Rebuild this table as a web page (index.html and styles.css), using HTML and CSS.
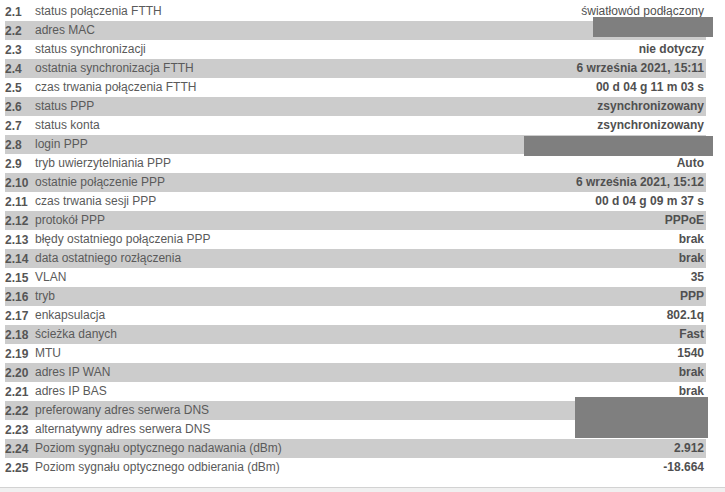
FILE: index.html
```html
<!DOCTYPE html>
<html lang="pl">
<head>
<meta charset="utf-8">
<title>Status FTTH</title>
<link rel="stylesheet" href="styles.css">
</head>
<body>
<div class="page">
  <div class="status">
    <div class="row"><span class="num">2.1</span><span class="label">status połączenia FTTH</span><span class="val normal">światłowód podłączony</span></div>
    <div class="row alt"><span class="num">2.2</span><span class="label">adres MAC</span><span class="val"></span></div>
    <div class="row"><span class="num">2.3</span><span class="label">status synchronizacji</span><span class="val">nie dotyczy</span></div>
    <div class="row alt"><span class="num">2.4</span><span class="label">ostatnia synchronizacja FTTH</span><span class="val">6 września 2021, 15:11</span></div>
    <div class="row"><span class="num">2.5</span><span class="label">czas trwania połączenia FTTH</span><span class="val">00 d 04 g 11 m 03 s</span></div>
    <div class="row alt"><span class="num">2.6</span><span class="label">status PPP</span><span class="val">zsynchronizowany</span></div>
    <div class="row"><span class="num">2.7</span><span class="label">status konta</span><span class="val">zsynchronizowany</span></div>
    <div class="row alt"><span class="num">2.8</span><span class="label">login PPP</span><span class="val"></span></div>
    <div class="row"><span class="num">2.9</span><span class="label">tryb uwierzytelniania PPP</span><span class="val">Auto</span></div>
    <div class="row alt"><span class="num">2.10</span><span class="label">ostatnie połączenie PPP</span><span class="val">6 września 2021, 15:12</span></div>
    <div class="row"><span class="num">2.11</span><span class="label">czas trwania sesji PPP</span><span class="val">00 d 04 g 09 m 37 s</span></div>
    <div class="row alt"><span class="num">2.12</span><span class="label">protokół PPP</span><span class="val">PPPoE</span></div>
    <div class="row"><span class="num">2.13</span><span class="label">błędy ostatniego połączenia PPP</span><span class="val">brak</span></div>
    <div class="row alt"><span class="num">2.14</span><span class="label">data ostatniego rozłączenia</span><span class="val">brak</span></div>
    <div class="row"><span class="num">2.15</span><span class="label">VLAN</span><span class="val">35</span></div>
    <div class="row alt"><span class="num">2.16</span><span class="label">tryb</span><span class="val">PPP</span></div>
    <div class="row"><span class="num">2.17</span><span class="label">enkapsulacja</span><span class="val">802.1q</span></div>
    <div class="row alt"><span class="num">2.18</span><span class="label">ścieżka danych</span><span class="val">Fast</span></div>
    <div class="row"><span class="num">2.19</span><span class="label">MTU</span><span class="val">1540</span></div>
    <div class="row alt"><span class="num">2.20</span><span class="label">adres IP WAN</span><span class="val">brak</span></div>
    <div class="row"><span class="num">2.21</span><span class="label">adres IP BAS</span><span class="val">brak</span></div>
    <div class="row alt"><span class="num">2.22</span><span class="label">preferowany adres serwera DNS</span><span class="val"></span></div>
    <div class="row"><span class="num">2.23</span><span class="label">alternatywny adres serwera DNS</span><span class="val"></span></div>
    <div class="row alt"><span class="num">2.24</span><span class="label">Poziom sygnału optycznego nadawania (dBm)</span><span class="val">2.912</span></div>
    <div class="row"><span class="num">2.25</span><span class="label">Poziom sygnału optycznego odbierania (dBm)</span><span class="val">-18.664</span></div>
  </div>
  <div class="footer"></div>
  <div class="redact r-mac"></div>
  <div class="redact r-login"></div>
  <div class="redact r-dns"></div>
</div>
</body>
</html>
```

FILE: styles.css
```css
html, body {
  margin: 0;
  padding: 0;
  background: #ffffff;
}

.page {
  position: relative;
  width: 725px;
  height: 492px;
  display: flex;
  flex-direction: column;
  font-family: "Liberation Sans", Arial, sans-serif;
  font-size: 12px;
  color: #555555;
  overflow: hidden;
}

.status {
  display: flex;
  flex-direction: column;
  width: 701px;
  margin: 2px 0 10px 5px;
}

.row {
  display: flex;
  height: 19px;
  line-height: 19px;
  white-space: nowrap;
  flex: none;
}

.row.alt {
  background: #cccccc;
}

.num {
  flex: none;
  width: 30px;
  font-weight: bold;
  color: #555555;
  padding-top: 1px;
  line-height: 18px;
}

.label {
  flex: none;
  width: 400px;
  color: #5a5a5a;
}

.val {
  flex: 1;
  text-align: right;
  font-weight: bold;
  color: #505050;
  padding-right: 2px;
}

.val.normal {
  font-weight: normal;
}

.footer {
  flex: 1;
  border-top: 1px solid #d2d2d2;
  background: #f0f0f0;
}

.redact {
  position: absolute;
  background: #7f7f7f;
}

.r-mac {
  left: 593px;
  top: 17px;
  width: 120px;
  height: 20px;
}

.r-login {
  left: 524px;
  top: 136px;
  width: 189px;
  height: 20px;
}

.r-dns {
  left: 575px;
  top: 397px;
  width: 133px;
  height: 41px;
}
```
